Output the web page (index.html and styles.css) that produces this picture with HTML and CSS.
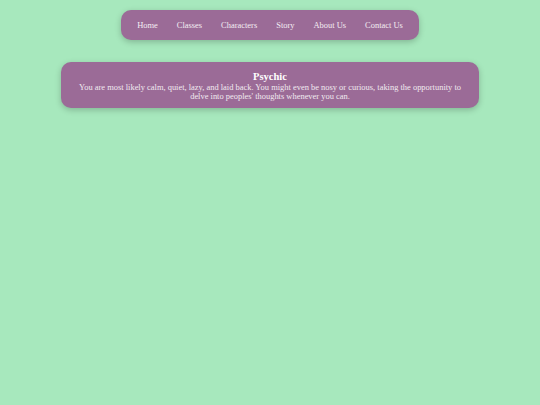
FILE: index.html
```html
<!DOCTYPE html>
<html>
<head>
<meta charset="utf-8">
<link rel="stylesheet" href="styles.css">
</head>
<body>
<nav class="nav">
  <a class="nav-link" href="#">Home</a>
  <a class="nav-link" href="#">Classes</a>
  <a class="nav-link" href="#">Characters</a>
  <a class="nav-link" href="#">Story</a>
  <a class="nav-link" href="#">About Us</a>
  <a class="nav-link" href="#">Contact Us</a>
</nav>
<section class="card">
  <h2 class="card-title">Psychic</h2>
  <p class="card-text">You are most likely calm, quiet, lazy, and laid back. You might even be nosy or curious, taking the opportunity to delve into peoples' thoughts whenever you can.</p>
</section>
</body>
</html>
```

FILE: styles.css
```css
html, body {
  margin: 0;
  padding: 0;
}
body {
  background: #a7e8bd;
  font-family: "Liberation Serif", "Times New Roman", serif;
  color: #ffffff;
  display: flex;
  flex-direction: column;
  align-items: center;
  padding-top: 10px;
  min-height: 405px;
  box-sizing: border-box;
}
.nav {
  display: flex;
  align-items: center;
  gap: 19px;
  height: 30px;
  padding: 1px 16px 0;
  background: #9b6b97;
  border-radius: 10px;
  box-shadow: 0 2px 6px rgba(0, 0, 0, 0.22);
  box-sizing: border-box;
}
.nav-link {
  color: #f4eef3;
  text-decoration: none;
  font-size: 8.45px;
  line-height: 1;
}
.card {
  margin-top: 22px;
  width: 418px;
  box-sizing: border-box;
  padding: 8.5px 16px 6.5px;
  background: #9b6b97;
  border-radius: 10px;
  box-shadow: 0 2px 6px rgba(0, 0, 0, 0.22);
  text-align: center;
}
.card-title {
  margin: 0;
  font-size: 10.5px;
  line-height: 12px;
  font-weight: bold;
  color: #ffffff;
}
.card-text {
  margin: 0;
  font-size: 8.45px;
  line-height: 9.7px;
  color: #f1eaf0;
}
```
